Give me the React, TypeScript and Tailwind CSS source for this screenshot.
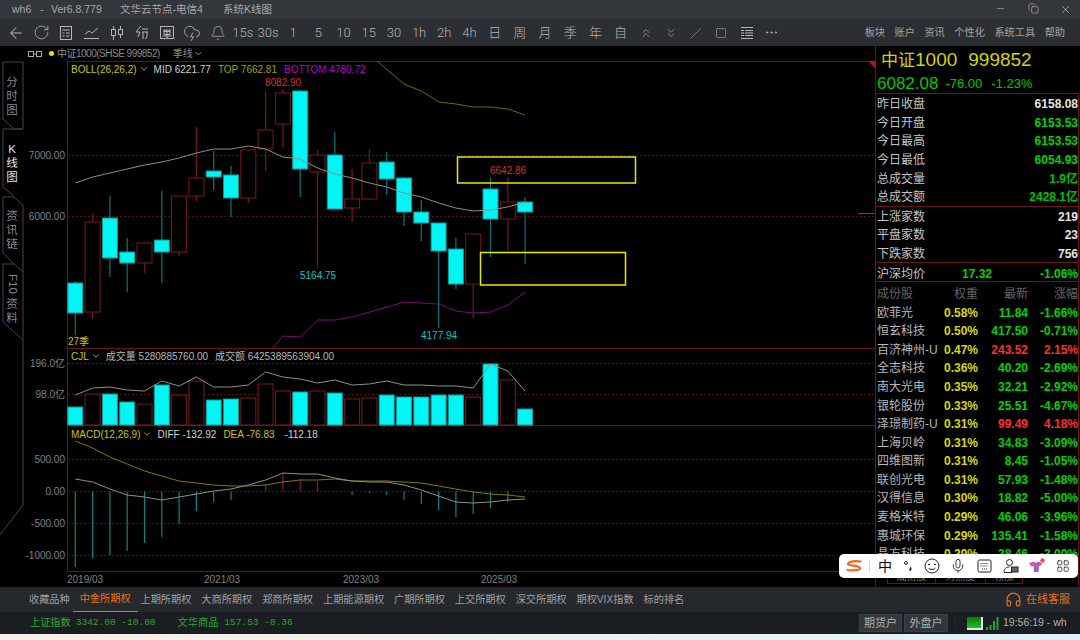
import { ArrowLeft, Bell, ChevronDown, ChevronsDown, ChevronsUp, CloudLightning, Copy, Ellipsis, Headphones, LayoutGrid, Mic, Minus, RotateCw, Slash, Square, X } from "lucide-react";

const SANS = "[font-family:'Liberation_Sans','Noto_Sans_CJK_SC',sans-serif]";

// candle readings: [open/close top, bottom, wick top, wick bottom, up?]
const candles: [number, number, number, number, boolean][] = [
  [283, 313, 281, 335, false],
  [222, 312, 213, 319, true],
  [218, 258, 196, 277, false],
  [252, 263, 238, 292, false],
  [243, 263, 242, 273, true],
  [240, 252, 191, 283, false],
  [196, 252, 196, 256, true],
  [178, 196, 127, 201, true],
  [171, 177, 151, 190, false],
  [175, 198, 166, 217, false],
  [150, 198, 150, 203, true],
  [130, 149, 91, 171, true],
  [93, 124, 89, 148, true],
  [91, 169, 90, 197, false],
  [155, 172, 150, 268, true],
  [155, 209, 132, 209, false],
  [199, 208, 169, 222, true],
  [163, 199, 149, 200, true],
  [162, 179, 152, 195, false],
  [178, 212, 177, 226, false],
  [212, 223, 200, 241, false],
  [223, 251, 223, 328, false],
  [249, 284, 238, 289, false],
  [234, 284, 233, 318, true],
  [189, 219, 178, 257, false],
  [202, 219, 177, 250, true],
  [202, 212, 197, 264, false],
];

// volume bar tops, bars sit on y=425
const volumes: [number, boolean][] = [
  [407, false], [394, true], [394, false], [402, false], [404, true], [385, false], [395, true],
  [381, true], [400, false], [399, false], [398, true], [384, true], [391, true], [392, false],
  [391, true], [393, false], [399, true], [398, true], [395, false], [397, false], [397, false],
  [395, false], [395, false], [397, true], [364, false], [380, true], [409, false],
];

// macd histogram ends, zero line at y=491.5
const macdBars: [number, boolean][] = [
  [567, false], [558, false], [555, false], [551, false], [543, false], [537, false], [524, false],
  [511, false], [502, false], [500, false], [492, false], [484, true], [473, true], [479, true],
  [481, true], [491, false], [495, false], [493, false], [495, false], [500, false], [504, false],
  [510, false], [517, false], [514, false], [508, false], [502, false], [490, false],
];

const midLine = [183, 177, 173, 169, 165, 162, 158, 153, 149, 149, 146, 149, 157, 159, 168, 174, 178, 183, 187, 193, 197, 203, 208, 211, 210, 207, 202];
const topLine: [number, number][] = [[377, 61], [404, 84], [421, 91], [439, 102], [456, 104], [473, 107], [491, 107], [508, 109], [525, 115]];
const bottomLine: [number, number][] = [[273, 348], [283, 336], [300, 337], [318, 320], [335, 320], [352, 317], [370, 312], [387, 307], [404, 302], [421, 303], [439, 304], [456, 311], [473, 313], [491, 312], [508, 305], [525, 292]];
const volLine = [395, 388, 387, 390, 391, 381, 386, 377, 387, 387, 385, 372, 377, 379, 383, 380, 385, 384, 381, 385, 385, 386, 386, 388, 364, 371, 391];
const deaLine = [441, 448, 457, 464, 471, 476, 481, 483, 485, 486, 486, 485, 482, 480, 480, 479, 481, 481, 481, 482, 483, 486, 489, 492, 494, 495, 497];
const diffLine = [479, 482, 489, 495, 497, 500, 497, 494, 491, 489, 485, 480, 473, 474, 474, 478, 481, 482, 482, 485, 490, 496, 502, 503, 502, 500, 499];

const xAt = (i: number) => 75.3 + 17.3 * i;
const toPoints = (ys: number[]) => ys.map((y, i) => `${xAt(i)},${y}`).join(" ");

const stats = [
  ["昨日收盘", "6158.08", "text-[#e4e4e4]"],
  ["今日开盘", "6153.53", "text-[#00d400]"],
  ["今日最高", "6153.53", "text-[#00d400]"],
  ["今日最低", "6054.93", "text-[#00d400]"],
  ["总成交量", "1.9亿", "text-[#00c000]"],
  ["总成交额", "2428.1亿", "text-[#00c000]"],
];

const breadth = [
  ["上涨家数", "219"],
  ["平盘家数", "23"],
  ["下跌家数", "756"],
];

const stocks = [
  ["欧菲光", "0.58%", "11.84", "-1.66%"],
  ["恒玄科技", "0.50%", "417.50", "-0.71%"],
  ["百济神州-U", "0.47%", "243.52", "2.15%"],
  ["全志科技", "0.36%", "40.20", "-2.69%"],
  ["南大光电", "0.35%", "32.21", "-2.92%"],
  ["银轮股份", "0.33%", "25.51", "-4.67%"],
  ["泽璟制药-U", "0.31%", "99.49", "4.18%"],
  ["上海贝岭", "0.31%", "34.83", "-3.09%"],
  ["四维图新", "0.31%", "8.45", "-1.05%"],
  ["联创光电", "0.31%", "57.93", "-1.48%"],
  ["汉得信息", "0.30%", "18.82", "-5.00%"],
  ["麦格米特", "0.29%", "46.06", "-3.96%"],
  ["惠城环保", "0.29%", "135.41", "-1.58%"],
  ["晶方科技", "0.29%", "28.46", "-3.00%"],
];

const exchanges = ["上期所期权", "大商所期权", "郑商所期权", "上期能源期权", "广期所期权", "上交所期权", "深交所期权", "期权VIX指数", "标的排名"];
const periods = ["15s", "30s", "1", "5", "10", "15", "30", "1h", "2h", "4h", "日", "周", "月", "季", "年", "自"];
const menus = ["板块", "账户", "资讯", "个性化", "系统工具", "帮助"];

function ListIcon() {
  return (
    <svg width="16" height="16" viewBox="0 0 16 16" fill="none" stroke="currentColor">
      <rect x="2.5" y="1.5" width="11" height="13" />
      <path d="M4.5 5h7M4.5 8h2M8 8h3.5M4.5 11h2M8 11h3.5" />
    </svg>
  );
}

function TrendIcon() {
  return (
    <svg width="18" height="16" viewBox="0 0 18 16" fill="none" stroke="currentColor">
      <path d="M2 9l4-3 3 2 6-5M1 13.5h15" />
    </svg>
  );
}

function CandleIcon() {
  return (
    <svg width="16" height="16" viewBox="0 0 16 16" fill="none" stroke="currentColor">
      <path d="M4.5 1v3M4.5 11v4M11.5 1v3M11.5 10v3" />
      <rect x="2.5" y="4.5" width="4" height="6" />
      <rect x="9.5" y="4.5" width="4" height="5" />
    </svg>
  );
}

function FlashIcon() {
  return (
    <svg width="16" height="16" viewBox="0 0 16 16" fill="none" stroke="currentColor">
      <path d="M7 1L2 7h4l-2 5M8 4h6M8 7h6M9 7v7M13 7v5l-2 2" />
    </svg>
  );
}

function BoxIcon() {
  return (
    <svg width="16" height="16" viewBox="0 0 16 16" fill="none" stroke="currentColor">
      <rect x="1.5" y="1.5" width="13" height="12" />
      <path d="M4 6h8M5 4l1 2M11 4l-1 2M5 6.5h6v3H5zM8 4v9M3.5 11h9" />
    </svg>
  );
}

function ListLinesIcon() {
  return (
    <svg width="14" height="14" viewBox="0 0 14 14" fill="none" stroke="currentColor">
      <path d="M1 1.5h12M1 12.5h12M1 4.5h3M1 7h3M1 9.5h3M5 4.5h8M5 7h8M5 9.5h8" />
    </svg>
  );
}

function SogouLogo() {
  return (
    <svg width="16" height="12" viewBox="0 0 16 12" fill="none" stroke="#f26a1b" strokeWidth="2.2" strokeLinecap="round">
      <path d="M14.5 1.5C10 .8 2.5 1.2 2 3.8 1.6 6 13.6 5.2 14 8c.3 2.3-7.5 2.9-12.5 2" />
    </svg>
  );
}

function ShirtIcon() {
  return (
    <svg width="18" height="16" viewBox="0 0 18 16">
      <defs>
        <linearGradient id="shirt" x1="0" y1="0" x2="1" y2="1">
          <stop offset="0" stopColor="#f45a8c" />
          <stop offset="1" stopColor="#6f5cf0" />
        </linearGradient>
      </defs>
      <path d="M1 5l5-1.500c1 1.500 3 1.500 4 0l4 1.500-1.500 3-1.500-.5-.5 6.500H6L5.500 8 3 8.500z" fill="url(#shirt)" />
      <circle cx="14.500" cy="2.500" r="2.200" fill="#f04a3a" />
    </svg>
  );
}

function ImeBar() {
  return (
    <div className="absolute left-[839px] top-[554px] flex h-[24px] w-[239px] items-center rounded-[5px] bg-white pl-[7px] text-[#333]">
      <div className="flex w-[16px] justify-center">
        <SogouLogo />
      </div>
      <div className="ml-[7px] mr-[4px] h-[14px] w-px bg-[#ddd]" />
      <div className={`flex w-[22px] justify-center text-[14px] text-black ${SANS}`}>中</div>
      <div className="flex w-[23px] justify-center">
        <svg width="10" height="14" viewBox="0 0 10 14" fill="none" stroke="#222">
          <circle cx="3" cy="4" r="1.500" />
          <path d="M7 8.500c1 .5 1 2-.5 3" strokeWidth="1.800" />
        </svg>
      </div>
      <div className="flex w-[26px] justify-center">
        <svg width="16" height="16" viewBox="0 0 16 16" fill="none" stroke="#222">
          <circle cx="8" cy="8" r="7" />
          <path d="M4 6.500h2M10 6.500h2M4.500 10c1.500 2 5.500 2 7 0" />
        </svg>
      </div>
      <div className="flex w-[26px] justify-center">
        <Mic size={16} strokeWidth={1.3} color="#222" />
      </div>
      <div className="flex w-[27px] justify-center">
        <svg width="15" height="14" viewBox="0 0 15 14" fill="none" stroke="#222">
          <rect x="1" y="1" width="13" height="12" rx="1.500" />
          <path d="M3.500 4.500h8M3.500 7h8M5 10h5" strokeDasharray="1 1" />
        </svg>
      </div>
      <div className="flex w-[26px] justify-center">
        <svg width="16" height="16" viewBox="0 0 16 16" fill="none" stroke="#222">
          <circle cx="6.500" cy="4.500" r="3" />
          <path d="M1 14c0-4 3-5 5.500-5" />
          <rect x="8.500" y="9" width="6.500" height="5" fill="#666" />
          <path d="M1 14.500h8" />
        </svg>
      </div>
      <div className="flex w-[26px] justify-center">
        <ShirtIcon />
      </div>
      <div className="flex w-[26px] justify-center">
        <LayoutGrid size={14} strokeWidth={1.3} color="#222" />
      </div>
    </div>
  );
}

function TitleBar() {
  return (
    <div className={`flex h-[19px] items-center bg-[#33363a] pl-[12px] text-[10.500px] text-[#a8a8a8] ${SANS}`}>
      <span className="w-[28px]">wh6</span>
      <span className="w-[11px]">-</span>
      <span className="w-[69px]">Ver6.8.779</span>
      <span className="w-[103px]">文华云节点-电信4</span>
      <span>系统K线图</span>
      <div className="ml-auto flex text-[#c4c4c4]">
        <div className="flex w-[33px] justify-center"><Minus size={11} strokeWidth={1.2} /></div>
        <div className="flex w-[33px] justify-center"><Copy size={11} strokeWidth={1.2} /></div>
        <div className="flex w-[30px] justify-center"><X size={13} strokeWidth={1.2} /></div>
      </div>
    </div>
  );
}

function ToolBar() {
  const tool = "flex h-full w-[25.200px] shrink-0 items-center justify-center";
  return (
    <div className="flex h-[27px] items-center bg-[#2b2e33] pl-[3.500px] text-[#b4b4b4] [font-family:'Roboto','Noto_Sans_CJK_SC',sans-serif]">
      <div className={tool}><ArrowLeft size={18} strokeWidth={1.4} /></div>
      <div className={tool}><RotateCw size={17} strokeWidth={1.1} /></div>
      <div className={tool}><ListIcon /></div>
      <div className={tool}><TrendIcon /></div>
      <div className={tool}><CandleIcon /></div>
      <div className={tool}><FlashIcon /></div>
      <div className={tool}><BoxIcon /></div>
      <div className={tool}><CloudLightning size={18} strokeWidth={1.2} /></div>
      <div className={tool}><Bell size={16} strokeWidth={1.1} /></div>
      {periods.map((p) => (
        <div key={p} className={`${tool} text-[13px] font-light`}>{p}</div>
      ))}
      <div className={tool}><ChevronsUp size={14} strokeWidth={1.1} /></div>
      <div className={tool}><ChevronsDown size={14} strokeWidth={1.1} /></div>
      <div className={tool}><Slash size={12} strokeWidth={1} /></div>
      <div className={tool}><Square size={12} strokeWidth={1.1} /></div>
      <div className={tool}><ListLinesIcon /></div>
      <div className={tool}><Ellipsis size={15} strokeWidth={1.6} /></div>
      <div className={`ml-auto flex gap-[9.500px] pr-[15px] text-[10.200px] text-[#a4a4a4] ${SANS}`}>
        {menus.map((m) => (
          <span key={m}>{m}</span>
        ))}
      </div>
    </div>
  );
}

function LeftRail() {
  const chars = "flex flex-col items-center text-[11.500px] leading-[13.800px]";
  return (
    <div className={`relative h-full w-[24px] shrink-0 pt-[15px] text-[#8a8a8a] ${SANS}`}>
      <svg className="absolute left-0 top-0" width="24" height="541" viewBox="0 46 24 541" fill="none" stroke="#444">
        <path d="M3 62H23V129H14L3 119Z" />
        <path d="M23 129H3V187L14 196" />
        <path d="M3 197H14L23 205V505L0 535" />
        <path d="M3 197V253L14 264" />
        <path d="M3 264H14L23 272M3 264V322L23 340" />
      </svg>
      <div className={`relative h-[67px] pt-[15px] ${chars}`}>
        <span>分</span><span>时</span><span>图</span>
      </div>
      <div className={`relative h-[67px] pt-[15px] text-[#e0e0e0] ${chars}`}>
        <span>K</span><span>线</span><span>图</span>
      </div>
      <div className={`relative h-[67px] pt-[15px] ${chars}`}>
        <span>资</span><span>讯</span><span>链</span>
      </div>
      <div className={`relative h-[67px] pt-[12px] ${chars}`}>
        <span className="mb-[6px] h-[18px] [writing-mode:vertical-rl]">F10</span>
        <span>资</span><span>料</span>
      </div>
    </div>
  );
}

function Label({ x, y, fill, children, anchor }: { x: number; y: number; fill: string; children: string; anchor?: "end" }) {
  return (
    <text x={x} y={y} fill={fill} fontSize="10" textAnchor={anchor} fontFamily="'Liberation Sans','Noto Sans CJK SC',sans-serif">
      {children}
    </text>
  );
}

function Chart() {
  const frame = "#6e1414";
  const grid = "#571010";
  return (
    <svg width="851" height="526" viewBox="24 61 851 526" className="absolute left-0 top-0">
      {/* panel frame */}
      <path d="M67.500 61V571M67 61.500H875M67 348.500H875M67 425.500H875M67 571.500H875" stroke={frame} fill="none" />
      {[155.500, 216.500, 363.500, 394.500, 459.500, 491.500, 523.500, 555.500].map((y) => (
        <line key={y} x1="68" x2="875" y1={y} y2={y} stroke={grid} strokeDasharray="2 2" />
      ))}
      <path d="M858 213.500H875" stroke="#555" />
      <path d="M868 61H875V68Z" fill="#c41212" />

      {/* k lines */}
      <polyline points={topLine.map((p) => p.join(",")).join(" ")} fill="none" stroke="#6b6b00" />
      <polyline points={bottomLine.map((p) => p.join(",")).join(" ")} fill="none" stroke="#7d0a7d" />
      {candles.map(([top, bottom, high, low, up], i) => (
        <g key={i}>
          <line x1={xAt(i)} x2={xAt(i)} y1={high} y2={low} stroke={up ? "#701818" : "#0b6e6e"} strokeWidth="1.300" />
          <rect
            x={xAt(i) - 7.500}
            y={top}
            width="15"
            height={bottom - top}
            fill={up ? "#000" : "#00f5f5"}
            stroke={up ? "#7a1a1a" : "#0a9a9a"}
          />
        </g>
      ))}
      <polyline points={toPoints(midLine)} fill="none" stroke="#8f8f8f" />
      <rect x="457.500" y="157" width="178" height="26" fill="none" stroke="#e8e800" strokeWidth="1.500" />
      <rect x="480.500" y="252.500" width="145" height="32.500" fill="none" stroke="#e8e800" strokeWidth="1.500" />
      <Label x={265} y={86} fill="#d83030">8082.90</Label>
      <Label x={490} y={174} fill="#d83030">6642.86</Label>
      <Label x={300} y={279} fill="#00c8c8">5164.75</Label>
      <Label x={421} y={339} fill="#00c8c8">4177.94</Label>
      <Label x={68} y={345} fill="#c8c800">27季</Label>

      {/* volume */}
      {volumes.map(([top, up], i) => (
        <rect
          key={i}
          x={xAt(i) - 7.500}
          y={top}
          width="15"
          height={425 - top}
          fill={up ? "#000" : "#00f5f5"}
          stroke={up ? "#7a1a1a" : "#0a9a9a"}
        />
      ))}
      <polyline points={toPoints(volLine)} fill="none" stroke="#8f8f8f" />

      {/* macd */}
      {macdBars.map(([end, up], i) => (
        <line key={i} x1={xAt(i)} x2={xAt(i)} y1="491.500" y2={end} stroke={up ? "#8a1c1c" : "#0c8585"} strokeWidth="1.200" />
      ))}
      <polyline points={toPoints(deaLine)} fill="none" stroke="#7c7c00" />
      <polyline points={toPoints(diffLine)} fill="none" stroke="#8f8f8f" />

      {/* axes */}
      {[
        [159, "7000.00"],
        [220, "6000.00"],
        [367, "196.0亿"],
        [398, "98.0亿"],
        [463, "500.00"],
        [495, "0.00"],
        [527, "-500.00"],
        [559, "-1000.00"],
      ].map(([y, text]) => (
        <Label key={text} x={65} y={y as number} fill="#808080" anchor="end">{text as string}</Label>
      ))}
      {[
        [67, "2019/03"],
        [204, "2021/03"],
        [343, "2023/03"],
        [481, "2025/03"],
      ].map(([x, text]) => (
        <Label key={text} x={x as number} y={583} fill="#808080">{text as string}</Label>
      ))}
    </svg>
  );
}

function Legend({ className, children }: { className: string; children: React.ReactNode }) {
  return (
    <div className={`absolute left-[47px] flex h-[14px] items-center whitespace-nowrap text-[10px] ${className}`}>
      {children}
    </div>
  );
}

function ChartPanel() {
  return (
    <div className={`flex h-full w-[851px] shrink-0 flex-col ${SANS}`}>
      <div className="flex h-[15px] items-center pl-[4px] text-[10px] text-[#8c8c8c]">
        <svg width="14" height="6" viewBox="0 0 14 6" fill="none" stroke="#aaa">
          <rect x=".5" y=".5" width="5" height="5" />
          <rect x="8.500" y=".5" width="5" height="5" />
          <path d="M5 3h4" />
        </svg>
        <span className="ml-[7px] h-[5px] w-[5px] rounded-full bg-[#e6e600]" />
        <span className="ml-[3px] tracking-[-0.5px]">中证1000(SHSE 999852)</span>
        <span className="ml-[13px] flex items-center">
          季线
          <ChevronDown size={11} strokeWidth={1.5} className="text-[#c8c8c8]" />
        </span>
      </div>
      <div className="relative flex-1">
        <Chart />
        <Legend className="top-[1px]">
          <span className="text-[#c8c800]">BOLL(26,26,2)</span>
          <ChevronDown size={10} className="ml-[2px] text-[#c8c800]" />
          <span className="ml-[5px] text-[#d0d0d0]">MID 6221.77</span>
          <span className="ml-[7px] text-[#a0a000]">TOP 7662.81</span>
          <span className="ml-[7px] text-[#c000c0]">BOTTOM 4780.72</span>
        </Legend>
        <Legend className="top-[288px]">
          <span className="text-[#c8c800]">CJL</span>
          <ChevronDown size={10} className="ml-[2px] text-[#c8c800]" />
          <span className="ml-[5px] text-[#b8b8b8]">成交量 5280885760.00</span>
          <span className="ml-[7px] text-[#b8b8b8]">成交额 6425389563904.00</span>
        </Legend>
        <Legend className="top-[366px]">
          <span className="text-[#c8c800]">MACD(12,26,9)</span>
          <ChevronDown size={10} className="ml-[2px] text-[#c8c800]" />
          <span className="ml-[5px] text-[#d0d0d0]">DIFF -132.92</span>
          <span className="ml-[7px] text-[#c8c800]">DEA -76.83</span>
          <span className="ml-[10px] text-[#d0d0d0]">-112.18</span>
        </Legend>
      </div>
    </div>
  );
}

function QuotePanel() {
  const row = "flex h-[18.600px] items-center justify-between pt-[2px]";
  const stockRow = "grid h-[18.600px] grid-cols-[61px_40px_50px_1fr] items-center pt-[3px]";
  return (
    <div className={`flex h-full w-[205px] shrink-0 flex-col border-l border-[#6e1414] text-[12px] font-bold ${SANS}`}>
      <div className="h-[47px] pl-[5px] font-normal">
        <div className="flex h-[29px] items-center text-[19px] text-[#d4d400]">
          <span className="text-[17px]">中证</span>
          <span>1000</span>
          <span className="ml-[11px]">999852</span>
        </div>
        <div className="-ml-[4px] flex h-[17px] items-center text-[#00c800]">
          <span className="text-[17px]">6082.08</span>
          <span className="ml-[7px] text-[13px]">-76.00</span>
          <span className="ml-[9px] text-[13px]">-1.23%</span>
        </div>
      </div>
      <div className="mr-[1px] flex flex-1 flex-col border-r border-[#6e1414]">
        <div className="border-t border-[#6e1414] pl-[1px]">
          {stats.map(([label, value, color]) => (
            <div key={label} className={row}>
              <span className="font-normal text-[#c4c4c4]">{label}</span>
              <span className={color}>{value}</span>
            </div>
          ))}
        </div>
        <div className="border-t border-[#6e1414] pl-[1px]">
          {breadth.map(([label, value]) => (
            <div key={label} className={row}>
              <span className="font-normal text-[#c4c4c4]">{label}</span>
              <span className="text-[#e4e4e4]">{value}</span>
            </div>
          ))}
        </div>
        <div className="grid h-[19.600px] grid-cols-[85px_32px_1fr] items-center border-y border-[#6e1414] pl-[1px] pt-[2px] text-[#00d400]">
          <span className="font-normal text-[#c4c4c4]">沪深均价</span>
          <span>17.32</span>
          <span className="text-right">-1.06%</span>
        </div>
        <div className={`${stockRow} pl-[1px] font-normal text-[#666]`}>
          <span>成份股</span>
          <span className="text-right">权重</span>
          <span className="text-right">最新</span>
          <span className="text-right">涨幅</span>
        </div>
        {stocks.map(([name, weight, price, pct]) => {
          const color = pct.startsWith("-") ? "text-[#00d400]" : "text-[#ff3030]";
          return (
            <div key={name} className={`${stockRow} pl-[1px]`}>
              <span className="whitespace-nowrap font-normal text-[#b8b8b8]">{name}</span>
              <span className="text-right text-[#d8d800]">{weight}</span>
              <span className={`text-right ${color}`}>{price}</span>
              <span className={`text-right ${color}`}>{pct}</span>
            </div>
          );
        })}
        <div className="mt-auto mb-[3px] flex pl-[11px] text-[10px] font-normal text-[#777]">
          <span className="w-[49px] border-x border-b border-[#6e1414] text-center leading-[12px]">成份股</span>
          <span className="w-[50px] border-r border-b border-[#6e1414] text-center leading-[12px]">对照度</span>
          <span className="w-[37px] border-r border-b border-[#6e1414] text-center leading-[12px]">领涨</span>
        </div>
      </div>
    </div>
  );
}

function TabsBar() {
  return (
    <div className={`flex h-[25px] items-center gap-[9.900px] bg-[#25282c] pl-[29px] text-[10.200px] text-[#a0a0a0] ${SANS}`}>
      <span>收藏品种</span>
      <span className="-mx-[7px] flex h-full items-center border-b border-[#e8701c] px-[7px] text-[#e8701c]">中金所期权</span>
      {exchanges.map((e) => (
        <span key={e}>{e}</span>
      ))}
      <div className="ml-auto flex items-center pr-[10px] text-[11px] text-[#e8701c]">
        <Headphones size={17} strokeWidth={1.6} />
        <span className="ml-[4px]">在线客服</span>
      </div>
    </div>
  );
}

function StatusBar() {
  return (
    <div className={`flex h-[22px] items-center bg-[#1a1d22] pl-[30px] text-[10.200px] text-[#2fa52f] ${SANS}`}>
      <span>上证指数</span>
      <span className="ml-[5px] [font-family:'Liberation_Mono',monospace] text-[9.500px]">3342.00 -10.00</span>
      <span className="ml-[22px]">文华商品</span>
      <span className="ml-[6px] [font-family:'Liberation_Mono',monospace] text-[9.500px]">157.53 -0.36</span>
      <div className="ml-auto flex items-center text-[#b0b0b0]">
        <div className="flex h-[18px] w-[43px] items-center justify-center border border-[#3c4046] bg-[#33373c] text-[11px]">期货户</div>
        <div className="ml-[2px] flex h-[18px] w-[44px] items-center justify-center border border-[#3c4046] bg-[#33373c] text-[11px]">外盘户</div>
        <div className="ml-[7px] h-[12px] w-px bg-[#4a1c1c]" />
        <div className="ml-[11px] h-[13px] w-[16px] border-r-2 border-b-2 border-[#e8e8e8] bg-gradient-to-b from-[#0a7a0a] to-[#22c022]" />
        <svg className="ml-[3px]" width="13" height="13" viewBox="0 0 13 13" fill="#22a522">
          <rect x="0" y="10" width="2" height="3" />
          <rect x="3.500" y="8" width="2" height="5" />
          <rect x="7" y="4" width="2" height="9" />
          <rect x="10.500" y="0" width="2" height="13" />
        </svg>
        <span className="ml-[4px] w-[77px] text-[10.500px]">19:56:19 - wh</span>
      </div>
    </div>
  );
}

export default function App() {
  return (
    <div className="relative flex h-[640px] w-[1080px] flex-col overflow-hidden bg-black">
      <TitleBar />
      <ToolBar />
      <div className="flex h-[541px] bg-black">
        <LeftRail />
        <ChartPanel />
        <QuotePanel />
      </div>
      <TabsBar />
      <StatusBar />
      <div className="h-[6px] bg-gradient-to-r from-[#fbeee6] to-[#dff1f7]" />
      <ImeBar />
    </div>
  );
}
